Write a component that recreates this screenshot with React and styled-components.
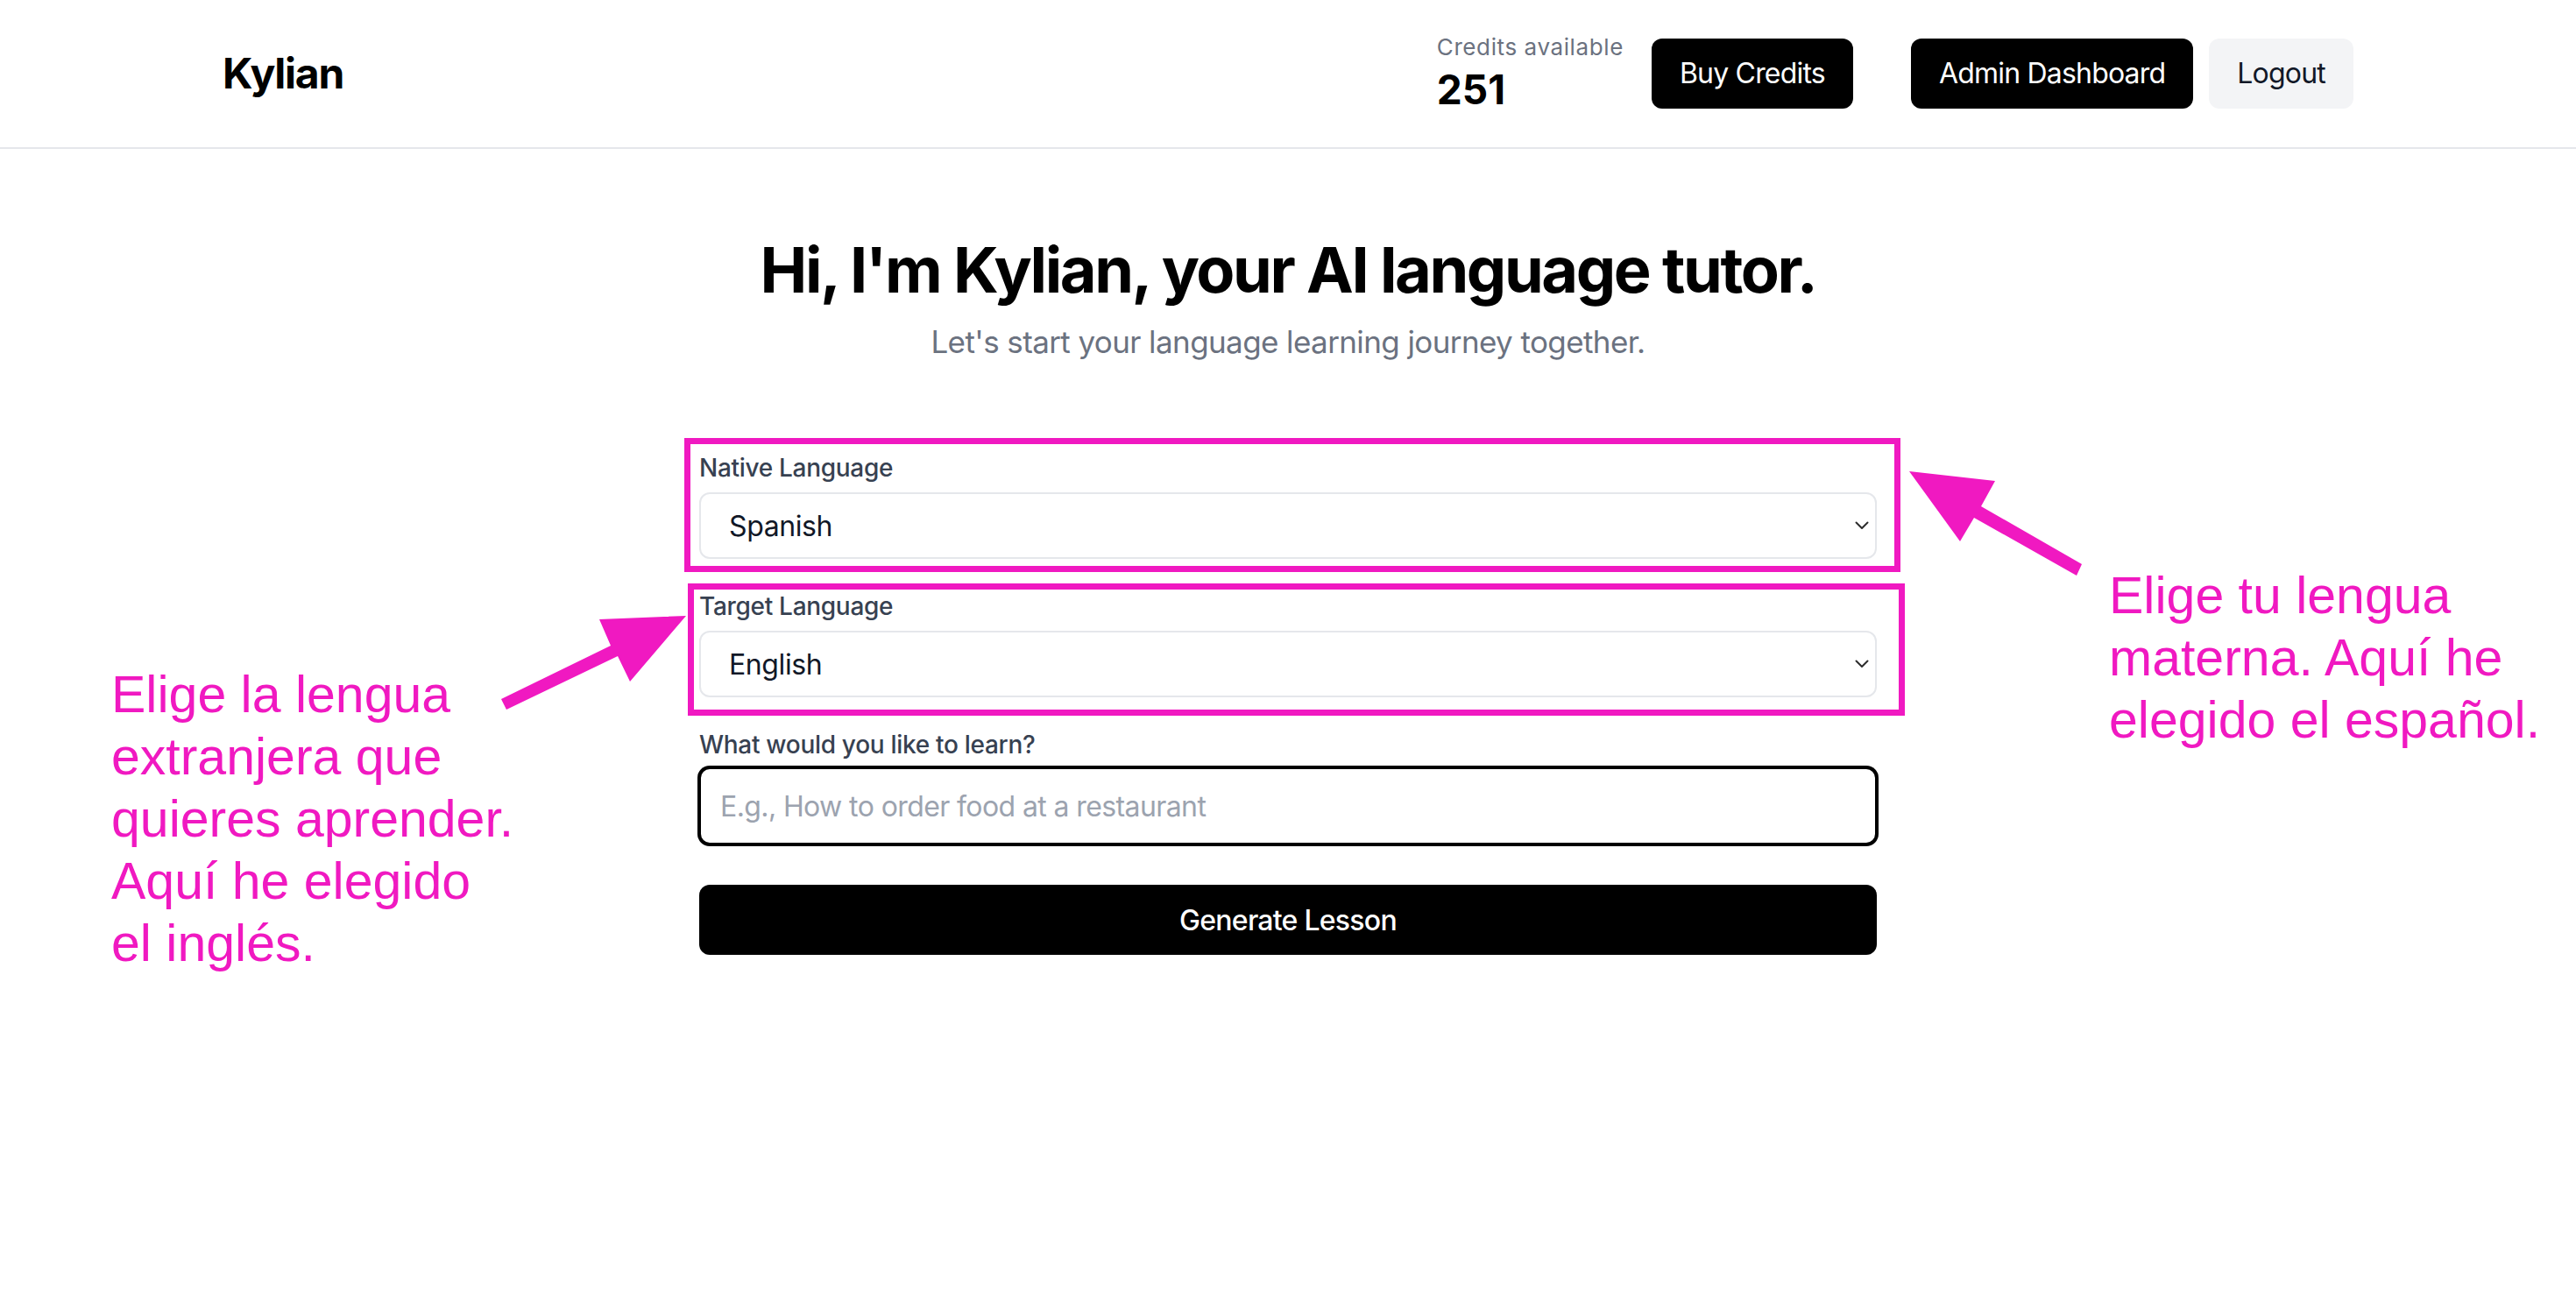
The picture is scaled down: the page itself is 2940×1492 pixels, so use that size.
import React from "react";
import styled, { createGlobalStyle } from "styled-components";

const MAGENTA = "#f019c1";

const GlobalStyle = createGlobalStyle`
  * {
    box-sizing: border-box;
  }
  body {
    margin: 0;
    background: #fff;
    font-family: Inter, "Noto Sans", sans-serif;
    color: #111827;
  }
`;

const Page = styled.div`
  position: relative;
  min-height: 100vh;
  background: #fff;
`;

const Header = styled.header`
  border-bottom: 2px solid #e5e7eb;
`;

const HeaderInner = styled.div`
  max-width: 2560px;
  height: 168px;
  margin: 0 auto;
  padding: 0 64px;
  display: flex;
  align-items: center;
  justify-content: space-between;
`;

const Brand = styled.div`
  font-size: 48px;
  line-height: 64px;
  font-weight: 700;
  letter-spacing: -1.2px;
  color: #000;
`;

const Nav = styled.nav`
  display: flex;
  align-items: center;
`;

const CreditGroup = styled.div`
  display: flex;
  align-items: center;
  gap: 32px;
  margin-right: 66px;
`;

const Credits = styled.div`
  display: flex;
  flex-direction: column;
`;

const CreditsLabel = styled.span`
  font-size: 26px;
  line-height: 32px;
  letter-spacing: 0.6px;
  color: #6b7280;
`;

const CreditsValue = styled.span`
  margin-top: 4px;
  font-size: 46px;
  line-height: 56px;
  font-weight: 700;
  color: #000;
`;

const AdminGroup = styled.div`
  display: flex;
  align-items: center;
  gap: 18px;
`;

const NavButton = styled.button`
  height: 80px;
  padding: 0 32px;
  border: none;
  border-radius: 12px;
  font-family: inherit;
  font-size: 32px;
  line-height: 48px;
  font-weight: 400;
  letter-spacing: -0.8px;
  cursor: pointer;
  background: ${p => (p.$light ? "#f3f4f6" : "#000")};
  color: ${p => (p.$light ? "#111827" : "#fff")};
`;

const Main = styled.main`
  padding-top: 98px;
  display: flex;
  flex-direction: column;
  align-items: center;
`;

const Title = styled.h1`
  margin: 0;
  font-size: 72px;
  line-height: 80px;
  font-weight: 700;
  letter-spacing: -2.4px;
  color: #000;
  text-align: center;
`;

const Subtitle = styled.p`
  margin: 14px 0 0;
  font-size: 35px;
  line-height: 56px;
  letter-spacing: -0.6px;
  color: #6b7280;
  text-align: center;
`;

const Form = styled.form`
  width: 1344px;
  margin-top: 96px;
  display: flex;
  flex-direction: column;
`;

const Field = styled.div`
  position: relative;
  display: flex;
  flex-direction: column;
  margin-top: ${p => p.$gap || 0}px;
`;

const Label = styled.label`
  display: block;
  margin-bottom: ${p => p.$space}px;
  font-size: 28px;
  line-height: 40px;
  font-weight: 500;
  letter-spacing: -0.3px;
  color: #374151;
`;

const SelectWrap = styled.div`
  position: relative;
`;

const Select = styled.select`
  width: 100%;
  height: 76px;
  appearance: none;
  border: 2px solid #e5e7eb;
  border-radius: 12px;
  background: #fff;
  padding: 0 60px 0 32px;
  font-family: inherit;
  font-size: 32px;
  letter-spacing: -0.4px;
  color: #111827;
  outline: none;
`;

const Chevron = styled.svg`
  position: absolute;
  right: 9px;
  top: 50%;
  transform: translateY(-50%);
  width: 16px;
  height: 10px;
  pointer-events: none;
`;

const TextInput = styled.input`
  height: 88px;
  margin-top: 6px;
  border: 2px solid #000;
  box-shadow: 0 0 0 2px #000;
  border-radius: 12px;
  padding: 0 22px;
  font-family: inherit;
  font-size: 32px;
  letter-spacing: -0.6px;
  color: #111827;
  outline: none;

  &::placeholder {
    color: #9ca3af;
  }
`;

const Submit = styled.button`
  margin-top: 46px;
  height: 80px;
  border: none;
  border-radius: 12px;
  background: #000;
  color: #fff;
  font-family: inherit;
  font-size: 32px;
  font-weight: 500;
  letter-spacing: -0.75px;
  cursor: pointer;
`;

const Highlight = styled.span`
  position: absolute;
  top: ${p => p.$t}px;
  right: ${p => p.$r}px;
  bottom: ${p => p.$b}px;
  left: ${p => p.$l}px;
  border: 7px solid ${MAGENTA};
  pointer-events: none;
`;

const Note = styled.p`
  position: absolute;
  left: ${p => p.$left}px;
  top: ${p => p.$top}px;
  margin: 0;
  font-family: "Liberation Sans", Arial, sans-serif;
  font-size: 59px;
  line-height: 71px;
  color: ${MAGENTA};
  white-space: nowrap;
`;

const ArrowSvg = styled.svg`
  position: absolute;
  left: ${p => p.$left}px;
  top: ${p => p.$top}px;
  pointer-events: none;
`;

function Arrow({ left, top, width, height, points }) {
  return (
    <ArrowSvg $left={left} $top={top} width={width} height={height} viewBox={`0 0 ${width} ${height}`}>
      <polygon points={points} fill={MAGENTA} />
    </ArrowSvg>
  );
}

function LanguageSelect({ id, label, value, options, box }) {
  return (
    <Field $gap={box.gap}>
      <Label htmlFor={id} $space={8}>{label}</Label>
      <SelectWrap>
        <Select id={id} defaultValue={value}>
          {options.map(o => (
            <option key={o}>{o}</option>
          ))}
        </Select>
        <Chevron viewBox="0 0 16 10">
          <path d="M1.5 1.5 L8 8 L14.5 1.5" fill="none" stroke="#2d2d2d" strokeWidth="2" strokeLinecap="round" strokeLinejoin="round" />
        </Chevron>
      </SelectWrap>
      <Highlight $t={box.t} $r={box.r} $b={box.b} $l={box.l} />
    </Field>
  );
}

const languages = ["Spanish", "English", "French", "German", "Italian", "Portuguese"];

export default function App() {
  return (
    <Page>
      <GlobalStyle />
      <Header>
        <HeaderInner>
          <Brand>Kylian</Brand>
          <Nav>
            <CreditGroup>
              <Credits>
                <CreditsLabel>Credits available</CreditsLabel>
                <CreditsValue>251</CreditsValue>
              </Credits>
              <NavButton>Buy Credits</NavButton>
            </CreditGroup>
            <AdminGroup>
              <NavButton>Admin Dashboard</NavButton>
              <NavButton $light>Logout</NavButton>
            </AdminGroup>
          </Nav>
        </HeaderInner>
      </Header>

      <Main>
        <Title>Hi, I'm Kylian, your AI language tutor.</Title>
        <Subtitle>Let's start your language learning journey together.</Subtitle>

        <Form onSubmit={e => e.preventDefault()}>
          <LanguageSelect
            id="native"
            label="Native Language"
            value="Spanish"
            options={languages}
            box={{ gap: 0, t: -14, r: -27, b: -15, l: -17 }}
          />
          <LanguageSelect
            id="target"
            label="Target Language"
            value="English"
            options={languages}
            box={{ gap: 34, t: -6, r: -32, b: -21, l: -13 }}
          />
          <Field $gap={34}>
            <Label htmlFor="topic" $space={0}>What would you like to learn?</Label>
            <TextInput id="topic" type="text" placeholder="E.g., How to order food at a restaurant" />
          </Field>
          <Submit type="submit">Generate Lesson</Submit>
        </Form>
      </Main>

      <Arrow
        left={2170}
        top={530}
        width={215}
        height={135}
        points="9,8 107,19 91,48 206,114 200,127 83,61 67,88"
      />
      <Note $left={2407} $top={645}>
        Elige tu lengua
        <br />
        materna. Aquí he
        <br />
        elegido el español.
      </Note>

      <Arrow
        left={565}
        top={695}
        width={225}
        height={125}
        points="218,8 119,12 132,42 7,103 13,115 140,54 154,83"
      />
      <Note $left={127} $top={758}>
        Elige la lengua
        <br />
        extranjera que
        <br />
        quieres aprender.
        <br />
        Aquí he elegido
        <br />
        el inglés.
      </Note>
    </Page>
  );
}
